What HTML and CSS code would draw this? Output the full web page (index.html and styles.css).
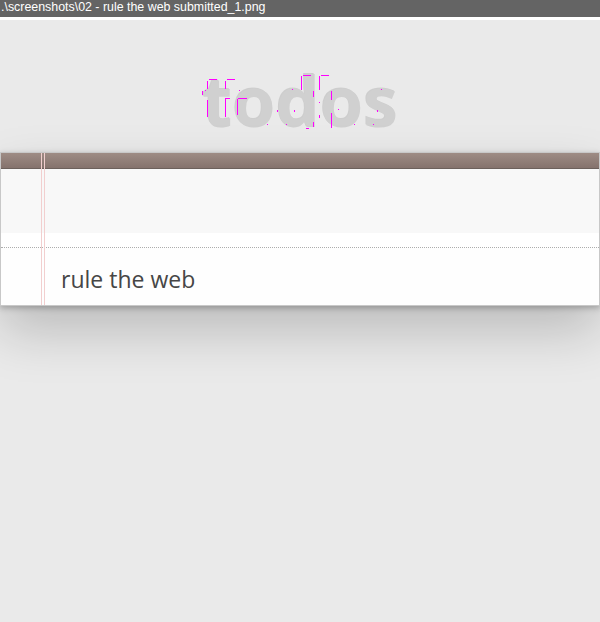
FILE: index.html
```html
<!DOCTYPE html>
<html>
<head>
<meta charset="utf-8">
<title>todos</title>
<link rel="stylesheet" href="styles.css">
</head>
<body>
<div class="titlebar">.\screenshots\02 - rule the web submitted_1.png</div>
<div class="page">
  <div class="hero">
    <h1 class="logo">todos</h1>
    <svg class="marks" viewBox="0 20 600 132" width="600" height="132" aria-hidden="true">
      <g fill="#ff00ff">
        <rect x="209" y="79" width="8" height="1"/>
        <rect x="207" y="81" width="1" height="8"/>
        <rect x="227" y="79" width="8" height="1"/>
        <rect x="225" y="81" width="1" height="8"/>
        <rect x="202" y="91" width="1" height="4"/>
        <rect x="205" y="90" width="1" height="1"/>
        <rect x="239" y="90" width="1" height="1"/>
        <rect x="225" y="98" width="5" height="1"/>
        <rect x="238" y="98" width="9" height="1"/>
        <rect x="207" y="100" width="1" height="17"/>
        <rect x="225" y="99" width="1" height="18"/>
        <rect x="237" y="99" width="1" height="16"/>
        <rect x="267" y="124" width="1" height="1"/>
        <rect x="277" y="110" width="1" height="2"/>
        <rect x="286" y="124" width="1" height="1"/>
        <rect x="292" y="89" width="1" height="1"/>
        <rect x="294" y="110" width="1" height="2"/>
        <rect x="303" y="75" width="8" height="1"/>
        <rect x="301" y="76" width="1" height="14"/>
        <rect x="321" y="75" width="8" height="1"/>
        <rect x="319" y="76" width="1" height="14"/>
        <rect x="313" y="91" width="1" height="6"/>
        <rect x="319" y="102" width="1" height="1"/>
        <rect x="313" y="122" width="1" height="5"/>
        <rect x="306" y="128" width="3" height="1"/>
        <rect x="319" y="115" width="1" height="3"/>
        <rect x="331" y="91" width="1" height="9"/>
        <rect x="331" y="113" width="1" height="15"/>
        <rect x="338" y="109" width="1" height="1"/>
        <rect x="354" y="124" width="1" height="1"/>
        <rect x="373" y="124" width="1" height="1"/>
        <rect x="377" y="110" width="1" height="2"/>
        <rect x="381" y="89" width="1" height="1"/>
      </g>
    </svg>
  </div>
  <section class="todoapp">
    <div class="app-header"></div>
    <div class="new-todo"></div>
    <div class="spacer"></div>
    <ul class="todo-list">
      <li class="todo-item"><label class="todo-label">rule the web</label></li>
    </ul>
  </section>
</div>
</body>
</html>
```

FILE: styles.css
```css
html, body {
  margin: 0;
  padding: 0;
}

body {
  background: #eaeaea;
  font-family: "Open Sans", "Liberation Sans", sans-serif;
  color: #4d4d4d;
  width: 600px;
  height: 622px;
  overflow: hidden;
}

.titlebar {
  height: 17px;
  background: #646464;
  color: #ffffff;
  font-family: "Liberation Sans", Arial, sans-serif;
  font-size: 12.4px;
  line-height: 15px;
  padding-left: 1px;
  white-space: nowrap;
  border-bottom: 3px solid #ffffff;
  box-sizing: content-box;
}

.page {
  display: flex;
  flex-direction: column;
}

.hero {
  position: relative;
  height: 132px;
  box-sizing: border-box;
  padding-top: 45px;
}

.logo {
  margin: 0;
  text-align: center;
  font-family: "Open Sans", sans-serif;
  font-weight: 700;
  font-size: 70px;
  line-height: 70px;
  color: #d0d0d0;
  text-shadow: -1px -1px rgba(0, 0, 0, 0.12);
}

.marks {
  position: absolute;
  left: 0;
  top: 0;
  display: block;
}

.todoapp {
  position: relative;
  background: #ffffff;
  border: 1px solid #c8c8c8;
  box-shadow: 0 2px 6px 0 rgba(0, 0, 0, 0.25), 0 25px 50px 0 rgba(0, 0, 0, 0.2);
}

.todoapp::before {
  content: "";
  position: absolute;
  top: 0;
  left: 40px;
  width: 2px;
  height: 100%;
  border-left: 1px solid #f2cfcf;
  border-right: 1px solid #f2cfcf;
  z-index: 3;
}

.app-header {
  height: 15px;
  background: linear-gradient(#9e8c85, #85736d);
  border-bottom: 1px solid #6c615c;
}

.new-todo {
  height: 64px;
  background: #f8f8f8;
}

.spacer {
  height: 14px;
  background: #ffffff;
}

.todo-list {
  list-style: none;
  margin: 0;
  padding: 0;
  border-top: 1px dotted #adadad;
}

.todo-item {
  height: 57px;
  box-sizing: border-box;
  padding-top: 17px;
  background: #fefefe;
}

.todo-label {
  display: block;
  margin-left: 45px;
  padding-left: 15px;
  font-size: 23px;
  line-height: 28px;
  color: #464646;
  white-space: pre;
}
```
